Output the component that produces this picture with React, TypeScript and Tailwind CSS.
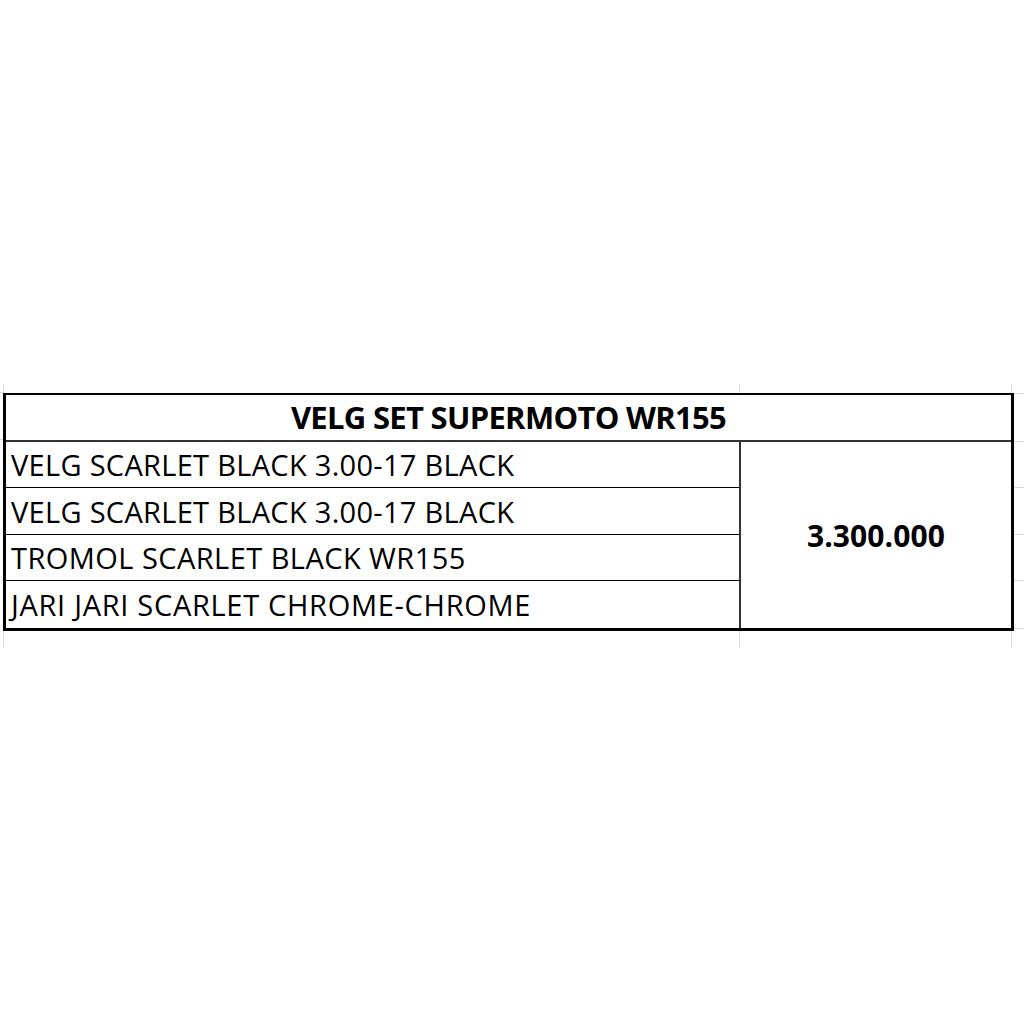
export default function App() {
  const rows = [
    { t: "VELG SCARLET BLACK 3.00-17 BLACK", c: "tracking-[0.3px]", h: "h-[46px]" },
    { t: "VELG SCARLET BLACK 3.00-17 BLACK", c: "tracking-[0.3px]", h: "h-[47px]" },
    { t: "TROMOL SCARLET BLACK WR155", c: "tracking-[0.45px]", h: "h-[46px]" },
    { t: "JARI JARI SCARLET CHROME-CHROME", c: "tracking-[0.7px]", h: "h-[47px]" },
  ];
  return (
    <div
      className="w-[1024px] h-[1024px] bg-white pt-[385px] text-black"
      style={{ fontFamily: '"Open Sans", "Noto Sans", sans-serif' }}
    >
      {/* top gridline stubs */}
      <div className="flex h-[8px]">
        <div className="w-[4px] border-r border-[#d9d9d9]" />
        <div className="w-[736px] border-r border-[#d9d9d9]" />
        <div className="w-[272px] border-r border-[#d9d9d9]" />
      </div>
      <div className="flex">
        {/* left stubs */}
        <div className="w-[3px] flex flex-col">
          <div className="h-[48px] border-t border-b border-[#d9d9d9] -mt-px" />
        </div>
        {/* table */}
        <div className="w-[1011px] border-l-[3px] border-r-[3px] border-t-2 border-b-[3px] border-black box-border">
          <div className="h-[47px] border-b-2 border-[#333] flex items-center justify-center">
            <span className="text-[31px] font-bold tracking-[-0.7px] leading-none">
              VELG SET SUPERMOTO WR155
            </span>
          </div>
          <div className="flex">
            <div className="w-[735px] border-r-2 border-[#333] flex flex-col">
              {rows.map((r, i) => (
                <div
                  key={i}
                  className={`${r.h} ${i < 3 ? "border-b border-black" : ""} flex items-center pl-[5px] box-border`}
                >
                  <span className={`text-[29px] ${r.c} leading-none`}>{r.t}</span>
                </div>
              ))}
            </div>
            <div className="flex-1 flex items-center justify-center pt-[1px]">
              <span className="text-[30px] font-bold tracking-[0.1px] leading-none">3.300.000</span>
            </div>
          </div>
        </div>
        {/* right stubs */}
        <div className="w-[10px] flex flex-col">
          <div className="h-[49px] border-t border-b border-[#d9d9d9]" />
          <div className="h-[46px] border-b border-[#d9d9d9]" />
          <div className="h-[47px] border-b border-[#d9d9d9]" />
          <div className="h-[46px] border-b border-[#d9d9d9]" />
          <div className="h-[48px] border-b border-[#d9d9d9]" />
        </div>
      </div>
      {/* bottom gridline stubs */}
      <div className="flex h-[16px]">
        <div className="w-[4px] border-r border-[#d9d9d9]" />
        <div className="w-[736px] border-r border-[#d9d9d9]" />
        <div className="w-[272px] border-r border-[#d9d9d9]" />
      </div>
    </div>
  );
}
